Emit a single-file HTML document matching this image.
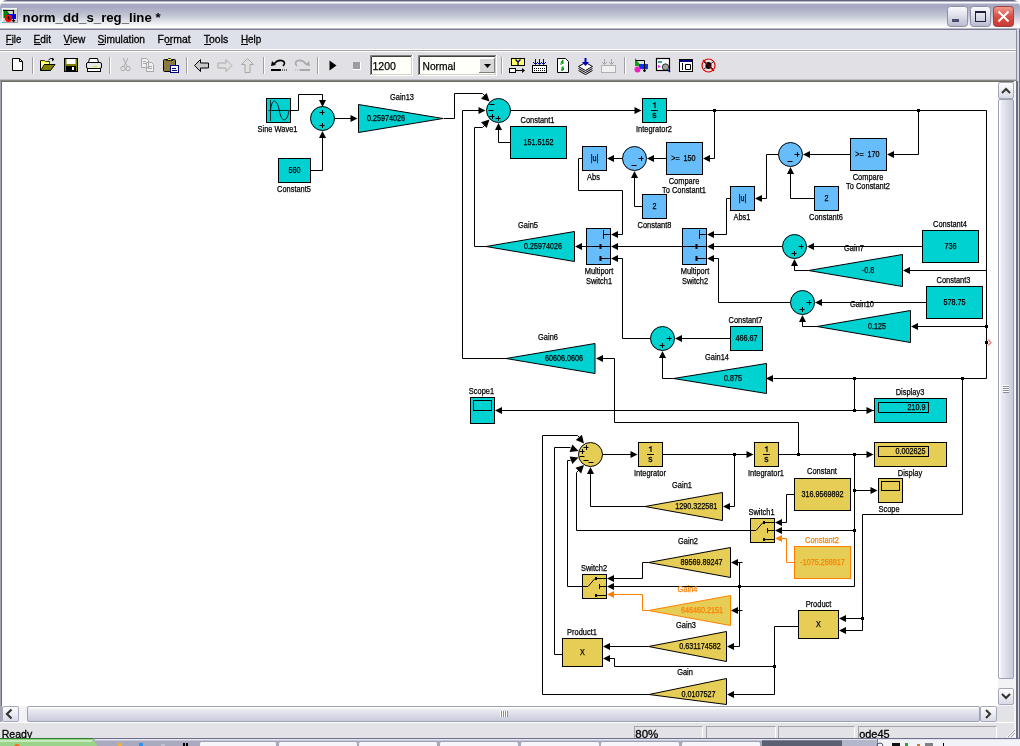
<!DOCTYPE html>
<html><head><meta charset="utf-8"><style>
html,body{margin:0;padding:0;width:1020px;height:746px;overflow:hidden;background:#fff;font-family:"Liberation Sans",sans-serif;}
.a{position:absolute;}
#title{left:0;top:0;width:1020px;height:29px;background:linear-gradient(to bottom,#5e5f7c 0px,#6a6b88 1px,#fafafc 2px,#ffffff 3px,#a9aac4 4px,#a7a8c2 7px,#c4c8d5 16px,#eef0f3 24px,#ffffff 27px,#fafafa 28px,#7a7b92 29px);border-radius:7px 7px 0 0;}
#ttext{left:23px;top:8px;font-weight:bold;font-size:14px;color:#000;white-space:nowrap;letter-spacing:0px;}
#menubar{left:0;top:29px;width:1020px;height:20px;background:#dfe1ea;border-top:1px solid #7b7c93;}
.mi{position:absolute;top:34px;font-size:12px;color:#000;}
#tb{left:0;top:49px;width:1020px;height:33px;background:linear-gradient(to bottom,#ffffff 0px,#ffffff 0.5px,#a4a4a6 1px,#a4a4a6 2px,#ffffff 2.5px,#e1e0e5 3px,#e1e0e5 30px,#9e9ea2 31px,#6d6d62 32px,#6d6d62 33px);}
#lb{left:0;top:81px;width:1px;height:641px;background:#a4a4ae;}
#lb2{left:1px;top:81px;width:1px;height:625px;background:#6d6d62;}
#rb{left:1014px;top:81px;width:6px;height:657px;background:linear-gradient(to right,#f6f6f0 0,#f6f6f0 2px,#6b6c86 2px,#6b6c86 4px,#d2d3de 4px,#d2d3de 5px,#6b6c86 5px);}
#vsb{left:998px;top:82px;width:16px;height:624px;background:#f3f3f6;}
#hsb{left:2px;top:706px;width:996px;height:16px;background:#f3f3f6;}
.btn{position:absolute;box-sizing:border-box;border:1px solid #a5a7bd;border-radius:2px;background:linear-gradient(to bottom,#ffffff,#d9dae6);}
.thumbv{position:absolute;box-sizing:border-box;border:1px solid #9d9fb3;border-radius:2px;background:linear-gradient(to right,#ffffff 0,#ffffff 1px,#ececf2 2px,#c9cbdc 100%);}
.thumbh{position:absolute;box-sizing:border-box;border:1px solid #9d9fb3;border-radius:2px;background:linear-gradient(to bottom,#ffffff 0,#ffffff 1px,#ececf2 2px,#c9cbdc 100%);}
#corner{left:997px;top:706px;width:17px;height:16px;background:#e3e2e6;}
#status{left:0;top:722px;width:1014px;height:16px;background:#e3e2e6;border-top:1px solid #fff;}
.sp{position:absolute;top:726px;height:12px;box-sizing:border-box;border-top:1px solid #a4a4a8;border-left:1px solid #a4a4a8;border-right:1px solid #ffffff;}
.st{position:absolute;top:726px;font-size:12px;color:#000;}
#task{left:0;top:738px;width:1020px;height:8px;background:linear-gradient(to bottom,#6a7088 0,#6a7088 1px,#c6c9d8 1px,#b7bbcc 8px);}
</style></head><body>
<div id="title" class="a"></div>
<svg class="a" style="left:947px;top:6px" width="68" height="22" viewBox="0 0 68 22">
 <defs>
  <linearGradient id="gb" x1="0" y1="0" x2="0" y2="1"><stop offset="0" stop-color="#fcfcfe"/><stop offset="0.6" stop-color="#d5d6e3"/><stop offset="1" stop-color="#b8b9cd"/></linearGradient>
  <linearGradient id="gr" x1="0" y1="0" x2="0" y2="1"><stop offset="0" stop-color="#f0a090"/><stop offset="0.5" stop-color="#d84f45"/><stop offset="1" stop-color="#c83a32"/></linearGradient>
 </defs>
 <rect x="0.5" y="0.5" width="20" height="20" rx="3" fill="url(#gb)" stroke="#8e90a8"/>
 <rect x="5" y="13" width="7" height="3" fill="#4b4c6a"/>
 <rect x="23.5" y="0.5" width="20" height="20" rx="3" fill="url(#gb)" stroke="#8e90a8"/>
 <rect x="28.5" y="5.5" width="10" height="10" fill="none" stroke="#20203a"/>
 <rect x="28" y="5" width="11" height="2" fill="#20203a"/>
 <rect x="46.5" y="0.5" width="20" height="20" rx="3" fill="url(#gr)" stroke="#a04040"/>
 <path d="M51.5,5.5 L61.5,15.5 M61.5,5.5 L51.5,15.5" stroke="#fff" stroke-width="2"/>
</svg>
<div id="menubar" class="a"></div>
<div id="tb" class="a"></div>

<div id="lb" class="a"></div>
<div id="lb2" class="a"></div>
<div id="rb" class="a"></div><div class="a" style="left:1016px;top:29px;width:4px;height:52px;background:linear-gradient(to right,#8c8da0 0,#8c8da0 1px,#d8d9e6 1px,#d8d9e6 3px,#6b6c86 3px)"></div>
<div id="vsb" class="a"></div>
<div class="btn" style="left:998px;top:82px;width:16px;height:17px"></div>
<svg class="a" style="left:998px;top:82px" width="16" height="17"><path d="M4,11 L8,7 L12,11" stroke="#333" stroke-width="2" fill="none"/></svg>
<div class="thumbv" style="left:998px;top:99px;width:16px;height:580px"></div>
<div class="btn" style="left:998px;top:688px;width:16px;height:17px"></div>
<svg class="a" style="left:998px;top:688px" width="16" height="17"><path d="M4,6 L8,10 L12,6" stroke="#333" stroke-width="2" fill="none"/></svg>
<div id="hsb" class="a"></div>
<div class="btn" style="left:2px;top:706px;width:17px;height:16px"></div>
<div class="a" style="left:1px;top:706px;width:1px;height:16px;background:#a8a8b2"></div><svg class="a" style="left:2px;top:706px" width="17" height="16"><path d="M9.5,3.5 L5,8 L9.5,12.5" stroke="#333" stroke-width="2.2" fill="none"/></svg>
<div class="thumbh" style="left:27px;top:706px;width:953px;height:16px"></div>
<div class="btn" style="left:980px;top:706px;width:17px;height:16px"></div>
<svg class="a" style="left:980px;top:706px" width="17" height="16"><path d="M6,4 L10,8 L6,12" stroke="#333" stroke-width="2" fill="none"/></svg>
<div id="corner" class="a"></div>
<div id="status" class="a"></div>
<div class="sp" style="left:634px;width:69px"></div>
<div class="sp" style="left:706px;width:70px"></div>
<div class="sp" style="left:778px;width:77px"></div>
<div class="sp" style="left:858px;width:139px"></div>
<div id="task" class="a"></div>
<svg class="a" style="left:0;top:0;will-change:transform" width="1020" height="746" font-family="Liberation Sans, sans-serif">
<rect x="2" y="8" width="16" height="15" fill="#fff"/><rect x="3" y="9" width="15" height="14" fill="#9a9a9a"/><rect x="3" y="9" width="14" height="13" fill="#d6d6d6"/>
<path d="M3.5,9.5 L3.5,18 L6,18 L9.5,14 L6.5,10 Z" fill="#008000"/>
<rect x="7" y="14" width="9" height="5" fill="#0000ff"/>
<circle cx="8.5" cy="18.3" r="3.6" fill="#ff0000"/>
<path d="M8.5,16 v3 h2" stroke="#000" fill="none" stroke-width="1.2"/>
<path d="M3,10.5 h10.5 v11" stroke="#000" fill="none" stroke-width="1.2"/><path d="M12,20 l1.5,2 l1.5,-2" stroke="#000" fill="none"/>
<rect x="2" y="22" width="1" height="1" fill="#00e0e0"/><rect x="17" y="8" width="1" height="1" fill="#00e0e0"/>
<rect x="32" y="57" width="1" height="17" fill="#a0a0a4"/><rect x="33" y="57" width="1" height="17" fill="#ffffff"/>
<rect x="109" y="57" width="1" height="17" fill="#a0a0a4"/><rect x="110" y="57" width="1" height="17" fill="#ffffff"/>
<rect x="186" y="57" width="1" height="17" fill="#a0a0a4"/><rect x="187" y="57" width="1" height="17" fill="#ffffff"/>
<rect x="263" y="57" width="1" height="17" fill="#a0a0a4"/><rect x="264" y="57" width="1" height="17" fill="#ffffff"/>
<rect x="317" y="57" width="1" height="17" fill="#a0a0a4"/><rect x="318" y="57" width="1" height="17" fill="#ffffff"/>
<rect x="501" y="57" width="1" height="17" fill="#a0a0a4"/><rect x="502" y="57" width="1" height="17" fill="#ffffff"/>
<rect x="624" y="57" width="1" height="17" fill="#a0a0a4"/><rect x="625" y="57" width="1" height="17" fill="#ffffff"/>
<path d="M12.5,58.5 h7 l3,3 v9 h-10 z" fill="#fff" stroke="#000"/><path d="M19.5,58.5 v3 h3" fill="none" stroke="#000"/>
<path d="M40.5,60.5 h4 l1,1 h4 v2 h-9 z" fill="#ffff00" stroke="#000" stroke-width="0.8"/>
<path d="M40.5,61 v9.5 h10 l4.5,-6 h-11 l-3.5,6" fill="#808000" stroke="#000"/>
<path d="M41,62 h8 v2 h-5 l-3,5 z" fill="#ffff80"/>
<path d="M48.5,60 q2,-3 5,-1" fill="none" stroke="#000"/><path d="M52,58 l2,1.5 l-2,1.5" fill="#000" stroke="#000" stroke-width="0.6"/>
<rect x="64.5" y="58.5" width="13" height="13" fill="#808000" stroke="#000"/>
<rect x="66.5" y="59" width="9" height="5" fill="#fff"/><rect x="66" y="66" width="10" height="5" fill="#000"/><rect x="72" y="67" width="2" height="3" fill="#fff"/>
<path d="M89.5,58.5 h8 l1,4 h-10 z" fill="#fff" stroke="#000"/>
<rect x="86.5" y="62.5" width="15" height="6" rx="1.5" fill="#e8e8e8" stroke="#000"/>
<rect x="87.5" y="68.5" width="13" height="3" fill="#fff" stroke="#000"/><rect x="93" y="66" width="4" height="1" fill="#e0e000"/>
<path d="M123,58 l4,8 M128,58 l-4,8" stroke="#a8a8a8" fill="none"/><circle cx="123" cy="68.5" r="2.2" fill="none" stroke="#a8a8a8"/><circle cx="128" cy="68.5" r="2.2" fill="none" stroke="#a8a8a8"/>
<path d="M141.5,58.5 h5 l2,2 v7 h-7 z M146.5,62.5 h5 l2,2 v7 h-7 z" fill="#f0f0f0" stroke="#a8a8a8"/>
<path d="M143,61.5 h3 M143,63.5 h3 M148,66.5 h4 M148,68.5 h4" stroke="#a8a8a8"/>
<rect x="163.5" y="59.5" width="12" height="12" rx="1" fill="#8a7a40" stroke="#000"/>
<path d="M166.5,60.5 l2,-2 h2 l2,2 z" fill="#ffff40" stroke="#000" stroke-width="0.8"/>
<rect x="170.5" y="65.5" width="8" height="7" fill="#fff" stroke="#000080"/><path d="M172,68.5 h4 M172,70.5 h5" stroke="#000080"/>
<path d="M194.5,65.5 l6,-6 v3.5 h8 v5 h-8 v3.5 z" fill="#c8c8c8" stroke="#000"/>
<path d="M232,65.5 l-6,-6 v3.5 h-8 v5 h8 v3.5 z" fill="#e0e0e0" stroke="#a8a8a8"/>
<path d="M247.5,58.5 l6,6 h-3.5 v8 h-5 v-8 h-3.5 z" fill="#e0e0e0" stroke="#a8a8a8"/>
<path d="M274,64 q4,-5 9,-3 q3,2 0,5" fill="none" stroke="#000" stroke-width="1.6"/><path d="M272,61 l4,4 l-5,1 z" fill="#000"/><rect x="271" y="69" width="10" height="2" fill="#000"/><path d="M282,70 h5" stroke="#000" stroke-dasharray="1,1"/>
<path d="M306,64 q-4,-5 -9,-3 q-3,2 0,5" fill="none" stroke="#a8a8a8" stroke-width="1.6"/><path d="M309,61 l-4,4 l5,1 z" fill="#a8a8a8"/><rect x="300" y="69" width="10" height="2" fill="#a8a8a8"/><path d="M295,70 h5" stroke="#a8a8a8" stroke-dasharray="1,1"/>
<path d="M329.5,60.5 l7,5 l-7,5 z" fill="#000"/>
<rect x="353" y="62" width="7" height="7" fill="#9c9ba6"/><path d="M353,69.5 h8 M360.5,62 v8" stroke="#fff"/>
<rect x="370" y="55" width="43" height="21" fill="#fffffa"/><path d="M370.5,75 v-19.5 h42" stroke="#808080" fill="none"/><path d="M371.5,74 v-17.5 h40" stroke="#404040" fill="none"/><path d="M371,74.5 h41 M411.5,56 v19" stroke="#d4d0c8"/><path d="M370,75.5 h43 M412.5,55 v21" stroke="#ffffff"/>
<text x="372.5" y="69.5" font-size="11" textLength="23.5" lengthAdjust="spacingAndGlyphs" stroke="#000" stroke-width="0.25">1200</text>
<rect x="418" y="55" width="79" height="21" fill="#fffffa"/><path d="M418.5,75 v-19.5 h78" stroke="#808080" fill="none"/><path d="M419.5,74 v-17.5 h76" stroke="#404040" fill="none"/><path d="M419,74.5 h77 M495.5,56 v19" stroke="#d4d0c8"/><path d="M418,75.5 h79 M496.5,55 v21" stroke="#ffffff"/>
<rect x="479" y="58" width="16" height="15" fill="#d8d8d8"/><path d="M479.5,72.5 v-14 h15" stroke="#fff" fill="none"/><path d="M479,72.5 h16 M494.5,58 v15" stroke="#808080" fill="none"/>
<path d="M484,64 h7 l-3.5,4 z" fill="#000"/>
<text x="422.5" y="69.5" font-size="11" textLength="33" lengthAdjust="spacingAndGlyphs" stroke="#000" stroke-width="0.25">Normal</text>
<rect x="511.5" y="58.5" width="13" height="7" fill="#ffff60" stroke="#000"/><path d="M515.5,59.5 l2.5,2.5 l2.5,-2.5 M518,62 v3" stroke="#000080" stroke-width="1.4" fill="none"/>
<rect x="509.5" y="68.5" width="6" height="4" fill="#fff" stroke="#000"/><path d="M516,70.5 h7" stroke="#000"/><path d="M522,68 l3,2.5 l-3,2.5 z" fill="#000"/>
<rect x="532.5" y="65.5" width="14" height="7" fill="#fff" stroke="#000"/><path d="M534,68.5 h11 M534,70.5 h11" stroke="#000" stroke-dasharray="1,1"/>
<path d="M535.5,59 v5 M539.5,59 v5 M543.5,59 v5 M533,62 l2.5,2.5 l2.5,-2.5 M537,62 l2.5,2.5 l2.5,-2.5 M541,62 l2.5,2.5 l2.5,-2.5" stroke="#0000a0" fill="none"/>
<path d="M557.5,58.5 h8 l3,3 v11 h-11 z" fill="#fff" stroke="#000"/><path d="M561,62 l2,-2 v4 z M564,69 l-2,2 v-4 z" fill="#10a010" stroke="#10a010"/><path d="M563,61 q-3,1 -2,4 M561,70 q3,-1 2,-4" stroke="#10a010" fill="none"/>
<path d="M578.5,66.5 l7,-4 l7,4 l-7,4 z" fill="#fff" stroke="#000"/><path d="M578.5,68.5 l7,4 l7,-4 M578.5,70.5 l7,4 l7,-4" fill="none" stroke="#000"/>
<path d="M585.5,58 v6" stroke="#0000c0" stroke-width="2"/><path d="M582,62 h7 l-3.5,4 z" fill="#0000c0"/>
<rect x="601.5" y="65.5" width="14" height="7" fill="#f0f0f0" stroke="#b0b0b0"/><path d="M604.5,59 v5 M611.5,59 v5 M602,62 l2.5,2.5 l2.5,-2.5 M609,62 l2.5,2.5 l2.5,-2.5" stroke="#a8a8a8" fill="none"/>
<path d="M635,58 v8 h6 z" fill="#10a010"/><rect x="639" y="64" width="9" height="5" fill="#1030f0"/><circle cx="637.5" cy="69.5" r="3" fill="#f020c0"/><path d="M635.5,60.5 h9 v11 M643,69.5 l1.5,2.5 l1.5,-2.5" stroke="#000" fill="none"/>
<rect x="656.5" y="58.5" width="13" height="12" fill="#fff" stroke="#000" stroke-width="1.2"/><rect x="658" y="61" width="4" height="2" fill="#40a0a0"/><path d="M658,65 l3,1.5 l-3,1.5 z" fill="#f020f0"/><circle cx="665.5" cy="67" r="3.2" fill="#a0a0a0" stroke="#000" stroke-width="0.7"/><path d="M668,70 l2,2" stroke="#000080" stroke-width="1.2"/>
<rect x="679.5" y="59.5" width="13" height="12" fill="#fff" stroke="#000"/><rect x="680" y="60" width="12" height="2" fill="#000080"/><path d="M682.5,63 v7 M685.5,64.5 h5 v5 h-5 z" stroke="#000" fill="none"/>
<circle cx="708.5" cy="65.5" r="6.5" fill="none" stroke="#e00000" stroke-width="1.2"/><ellipse cx="708.5" cy="65.5" rx="3" ry="3.5" fill="#000"/><path d="M703,60 l11,11" stroke="#e00000" stroke-width="1.2"/><path d="M704,62 l9,7 M713,62 l-9,7" stroke="#000" stroke-width="0.8"/>
<text x="5.8" y="43" font-size="11" textLength="15.4" lengthAdjust="spacingAndGlyphs" stroke="#000" stroke-width="0.3">File</text>
<rect x="6" y="44" width="7" height="1" fill="#000"/>
<text x="33.6" y="43" font-size="11" textLength="17.5" lengthAdjust="spacingAndGlyphs" stroke="#000" stroke-width="0.3">Edit</text>
<rect x="34" y="44" width="7" height="1" fill="#000"/>
<text x="63.5" y="43" font-size="11" textLength="21.7" lengthAdjust="spacingAndGlyphs" stroke="#000" stroke-width="0.3">View</text>
<rect x="64" y="44" width="6" height="1" fill="#000"/>
<text x="97.4" y="43" font-size="11" textLength="47.6" lengthAdjust="spacingAndGlyphs" stroke="#000" stroke-width="0.3">Simulation</text>
<rect x="98" y="44" width="7" height="1" fill="#000"/>
<text x="157.5" y="43" font-size="11" textLength="33.1" lengthAdjust="spacingAndGlyphs" stroke="#000" stroke-width="0.3">Format</text>
<rect x="166" y="44" width="6" height="1" fill="#000"/>
<text x="203.8" y="43" font-size="11" textLength="24.4" lengthAdjust="spacingAndGlyphs" stroke="#000" stroke-width="0.3">Tools</text>
<rect x="204" y="44" width="7" height="1" fill="#000"/>
<text x="240.9" y="43" font-size="11" textLength="20.4" lengthAdjust="spacingAndGlyphs" stroke="#000" stroke-width="0.3">Help</text>
<rect x="241" y="44" width="7" height="1" fill="#000"/>
<text x="22.6" y="21.5" font-size="13" font-weight="bold" textLength="138" lengthAdjust="spacingAndGlyphs">norm_dd_s_reg_line *</text>
<text x="1.7" y="737.6" font-size="11" textLength="30.5" lengthAdjust="spacingAndGlyphs" stroke="#000" stroke-width="0.3">Ready</text>
<text x="635.3" y="737.6" font-size="11" textLength="23" lengthAdjust="spacingAndGlyphs" stroke="#000" stroke-width="0.3">80%</text>
<text x="859.2" y="737.6" font-size="11" textLength="30.4" lengthAdjust="spacingAndGlyphs" stroke="#000" stroke-width="0.3">ode45</text>
<rect x="1003" y="385" width="6" height="1" fill="#fff"/><rect x="1003" y="386" width="6" height="1" fill="#8a8c9c"/>
<rect x="1003" y="387" width="6" height="1" fill="#fff"/><rect x="1003" y="388" width="6" height="1" fill="#8a8c9c"/>
<rect x="1003" y="389" width="6" height="1" fill="#fff"/><rect x="1003" y="390" width="6" height="1" fill="#8a8c9c"/>
<rect x="1003" y="391" width="6" height="1" fill="#fff"/><rect x="1003" y="392" width="6" height="1" fill="#8a8c9c"/>
<rect x="500" y="711" width="1" height="6" fill="#fff"/><rect x="501" y="711" width="1" height="6" fill="#8a8c9c"/>
<rect x="502" y="711" width="1" height="6" fill="#fff"/><rect x="503" y="711" width="1" height="6" fill="#8a8c9c"/>
<rect x="504" y="711" width="1" height="6" fill="#fff"/><rect x="505" y="711" width="1" height="6" fill="#8a8c9c"/>
<rect x="506" y="711" width="1" height="6" fill="#fff"/><rect x="507" y="711" width="1" height="6" fill="#8a8c9c"/>
<path d="M1007,737 L1015,729 M1010,737 L1015,732 M1013,737 L1015,735" stroke="#fff" stroke-width="1"/><path d="M1008,737 L1015,730 M1011,737 L1015,733" stroke="#a0a0a8" stroke-width="1"/>
<rect x="0" y="738" width="1020" height="8" fill="#a9aac0"/>
<rect x="0" y="738" width="1020" height="1" fill="#6e6f8c"/>
<rect x="95" y="739" width="925" height="1.5" fill="#e4e5ee"/>
<path d="M0,738 H93 L97,746 H0 Z" fill="#9ad48a"/>
<rect x="0" y="738" width="93" height="1" fill="#2a7d2a"/><rect x="0" y="740" width="92" height="2" fill="#c6eabb"/>
<circle cx="17" cy="747" r="3" fill="#f06a20"/>
<rect x="118" y="743" width="4" height="3" fill="#f0b040"/><rect x="139" y="743" width="4" height="3" fill="#3090f0"/><rect x="161" y="744" width="4" height="2" fill="#c0c0d0"/><rect x="183" y="743" width="2" height="3" fill="#000"/><rect x="186" y="743" width="2" height="3" fill="#000"/>
<rect x="199.5" y="741.5" width="77" height="6" rx="2" fill="#f6f6fa" stroke="#9d9fb5"/>
<rect x="278.5" y="741.5" width="79" height="6" rx="2" fill="#f6f6fa" stroke="#9d9fb5"/>
<rect x="358.5" y="741.5" width="79" height="6" rx="2" fill="#f6f6fa" stroke="#9d9fb5"/>
<rect x="439.5" y="741.5" width="79" height="6" rx="2" fill="#f6f6fa" stroke="#9d9fb5"/>
<rect x="520.5" y="741.5" width="79" height="6" rx="2" fill="#f6f6fa" stroke="#9d9fb5"/>
<rect x="600.5" y="741.5" width="79" height="6" rx="2" fill="#f6f6fa" stroke="#9d9fb5"/>
<rect x="681.5" y="741.5" width="79" height="6" rx="2" fill="#f6f6fa" stroke="#9d9fb5"/>
<rect x="762" y="740" width="80" height="6" fill="#5b6172"/><rect x="762" y="740" width="80" height="1" fill="#7c8294"/>
<rect x="842" y="740" width="35" height="6" fill="#b4b6cb"/>
<path d="M877,740 H1020 V746 H877 Z" fill="#f2f3f8"/><rect x="877" y="738" width="1" height="8" fill="#7a7c96"/>
<circle cx="880" cy="746" r="3" fill="none" stroke="#505060"/><rect x="892" y="743" width="8" height="3" fill="#101010"/><rect x="905" y="743" width="3" height="3" fill="#30a030"/><rect x="917" y="744" width="3" height="2" fill="#c08030"/><rect x="925" y="743" width="8" height="3" fill="#808080"/><rect x="943" y="743" width="1" height="3" fill="#000"/>
<rect x="266.5" y="98.5" width="24" height="24" fill="#00d2d2" stroke="#000"/>
<path d="M268.5,110.5 h21 M270.5,100 v21" stroke="#000" fill="none" stroke-width="0.8"/>
<path d="M270.5,110.5 C271.5,98 277,98 279.3,110.5 S287,123 289,110.5" stroke="#000" fill="none" stroke-width="0.9"/>
<text x="257.55" y="132.00" font-size="8.5" textLength="39.89" lengthAdjust="spacingAndGlyphs" fill="#000" stroke="#000" stroke-width="0.25">Sine Wave1</text>
<circle cx="322.5" cy="118.5" r="12" fill="#00d2d2" stroke="#000"/>
<path d="M319.5,112.5 h5 M322.5,110 v5" stroke="#000" fill="none"/>
<path d="M319.5,125.5 h5 M322.5,123 v5" stroke="#000" fill="none"/>
<rect x="278.5" y="158.5" width="32" height="24" fill="#00d2d2" stroke="#000"/>
<text x="288.49" y="172.50" font-size="8.5" textLength="12.01" lengthAdjust="spacingAndGlyphs" fill="#000" stroke="#000" stroke-width="0.25">560</text>
<text x="277.02" y="192.00" font-size="8.5" textLength="33.96" lengthAdjust="spacingAndGlyphs" fill="#000" stroke="#000" stroke-width="0.25">Constant5</text>
<polygon points="358.5,104.5 358.5,132.5 443,118.5" fill="#00d2d2" stroke="#000"/>
<text x="366.98" y="120.50" font-size="8.5" textLength="38.04" lengthAdjust="spacingAndGlyphs" fill="#000" stroke="#000" stroke-width="0.25">0.25974026</text>
<text x="389.99" y="100.00" font-size="8.5" textLength="24.02" lengthAdjust="spacingAndGlyphs" fill="#000" stroke="#000" stroke-width="0.25">Gain13</text>
<path d="M290.5,110.5 L298.5,110.5 L298.5,94.5 L322.5,94.5 L322.5,100.5" fill="none" stroke="#000" stroke-width="1"/>
<polygon points="322.5,107 319,100 326,100" fill="#000"/>
<path d="M310.5,170.5 L322.5,170.5 L322.5,137.5" fill="none" stroke="#000" stroke-width="1"/>
<polygon points="322.5,131 319,138 326,138" fill="#000"/>
<path d="M334.5,118.5 L351.5,118.5" fill="none" stroke="#000" stroke-width="1"/>
<polygon points="357.5,118.5 350.5,115 350.5,122" fill="#000"/>
<circle cx="498.5" cy="110.5" r="12" fill="#00d2d2" stroke="#000"/>
<path d="M489.5,104.5 h5" stroke="#000" fill="none"/>
<path d="M488.5,110.5 h5" stroke="#000" fill="none"/>
<path d="M489.5,116.5 h5 M492.5,114 v5" stroke="#000" fill="none"/>
<path d="M495.5,118.5 h5 M498.5,116 v5" stroke="#000" fill="none"/>
<path d="M443.5,118.5 L454.5,118.5 L454.5,93.5 L482.5,93.5 L485.5,96.5" fill="none" stroke="#000" stroke-width="1"/>
<polygon points="489.50,101.50 481.01,98.67 486.67,93.01" fill="#000"/>
<path d="M462.5,358.5 L462.5,110.5 L479.5,110.5" fill="none" stroke="#000" stroke-width="1"/>
<polygon points="485.5,110.5 478.5,107 478.5,114" fill="#000"/>
<path d="M474.5,246.5 L474.5,127.5 L482.5,127.5 L485.5,124.5" fill="none" stroke="#000" stroke-width="1"/>
<polygon points="489.50,119.50 486.67,127.99 481.01,122.33" fill="#000"/>
<path d="M510.5,142.5 L498.5,142.5 L498.5,129.5" fill="none" stroke="#000" stroke-width="1"/>
<polygon points="498.5,123 495,130 502,130" fill="#000"/>
<rect x="510.5" y="126.5" width="56" height="32" fill="#00d2d2" stroke="#000"/>
<text x="523.49" y="144.50" font-size="8.5" textLength="30.03" lengthAdjust="spacingAndGlyphs" fill="#000" stroke="#000" stroke-width="0.25">151.5152</text>
<text x="520.52" y="123.00" font-size="8.5" textLength="33.96" lengthAdjust="spacingAndGlyphs" fill="#000" stroke="#000" stroke-width="0.25">Constant1</text>
<path d="M510.5,110.5 L635.5,110.5" fill="none" stroke="#000" stroke-width="1"/>
<polygon points="641.5,110.5 634.5,107 634.5,114" fill="#000"/>
<rect x="642.5" y="98.5" width="24" height="24" fill="#00d2d2" stroke="#000"/>
<path d="M655.0,102 v6 M655.0,102.5 l-2,1.5" stroke="#000" stroke-width="1.1" fill="none"/>
<path d="M651.0,110.5 h7" stroke="#000"/>
<text x="652.30" y="117.8" font-size="8.5" stroke="#000" stroke-width="0.3">s</text>
<text x="635.99" y="132.00" font-size="8.5" textLength="36.03" lengthAdjust="spacingAndGlyphs" fill="#000" stroke="#000" stroke-width="0.25">Integrator2</text>
<path d="M666.5,110.5 L986.5,110.5 L986.5,378.5 L773.5,378.5" fill="none" stroke="#000" stroke-width="1"/>
<polygon points="766,378.5 773,375 773,382" fill="#000"/>
<rect x="713" y="109" width="3" height="3" fill="#000"/>
<rect x="917" y="109" width="3" height="3" fill="#000"/>
<rect x="985" y="325" width="3" height="3" fill="#000"/>
<rect x="853" y="377" width="3" height="3" fill="#000"/>
<rect x="961" y="377" width="3" height="3" fill="#000"/>
<rect x="985" y="341" width="3" height="3" fill="#000"/>
<path d="M988,339.5 l3,3 l-3,3" stroke="#f00" fill="none" stroke-width="1"/>
<path d="M714.5,110.5 L714.5,158.5 L709.5,158.5" fill="none" stroke="#000" stroke-width="1"/>
<polygon points="703,158.5 710,155 710,162" fill="#000"/>
<rect x="666.5" y="142.5" width="36" height="32" fill="#66bdfa" stroke="#000"/>
<text x="671.29" y="160.50" font-size="8.5" textLength="8.41" lengthAdjust="spacingAndGlyphs" fill="#000" stroke="#000" stroke-width="0.25">&gt;=</text>
<text x="683.49" y="160.50" font-size="8.5" textLength="12.01" lengthAdjust="spacingAndGlyphs" fill="#000" stroke="#000" stroke-width="0.25">150</text>
<text x="668.68" y="184.00" font-size="8.5" textLength="30.64" lengthAdjust="spacingAndGlyphs" fill="#000" stroke="#000" stroke-width="0.25">Compare</text>
<text x="662.05" y="193.00" font-size="8.5" textLength="43.90" lengthAdjust="spacingAndGlyphs" fill="#000" stroke="#000" stroke-width="0.25">To Constant1</text>
<path d="M666.5,158.5 L653.5,158.5" fill="none" stroke="#000" stroke-width="1"/>
<polygon points="647,158.5 654,155 654,162" fill="#000"/>
<circle cx="634.5" cy="158.5" r="12" fill="#66bdfa" stroke="#000"/>
<path d="M638.5,158.5 h5 M641.5,156 v5" stroke="#000" fill="none"/>
<path d="M631.5,165.5 h5" stroke="#000" fill="none"/>
<path d="M622.5,158.5 L613.5,158.5" fill="none" stroke="#000" stroke-width="1"/>
<polygon points="607,158.5 614,155 614,162" fill="#000"/>
<rect x="582.5" y="146.5" width="24" height="24" fill="#66bdfa" stroke="#000"/>
<text x="590.63" y="160.50" font-size="8.5" textLength="7.75" lengthAdjust="spacingAndGlyphs" fill="#000" stroke="#000" stroke-width="0.25">|u|</text>
<text x="587.08" y="180.00" font-size="8.5" textLength="12.84" lengthAdjust="spacingAndGlyphs" fill="#000" stroke="#000" stroke-width="0.25">Abs</text>
<path d="M582.5,158.5 L578.5,158.5 L578.5,190.5 L622.5,190.5 L622.5,234.5 L617.5,234.5" fill="none" stroke="#000" stroke-width="1"/>
<polygon points="611,234.5 618,231 618,238" fill="#000"/>
<rect x="642.5" y="194.5" width="24" height="24" fill="#66bdfa" stroke="#000"/>
<text x="652.50" y="208.50" font-size="8.5" textLength="4.00" lengthAdjust="spacingAndGlyphs" fill="#000" stroke="#000" stroke-width="0.25">2</text>
<text x="637.52" y="228.00" font-size="8.5" textLength="33.96" lengthAdjust="spacingAndGlyphs" fill="#000" stroke="#000" stroke-width="0.25">Constant8</text>
<path d="M642.5,206.5 L634.5,206.5 L634.5,177.5" fill="none" stroke="#000" stroke-width="1"/>
<polygon points="634.5,171 631,178 638,178" fill="#000"/>
<path d="M918.5,110.5 L918.5,154.5 L893.5,154.5" fill="none" stroke="#000" stroke-width="1"/>
<polygon points="887,154.5 894,151 894,158" fill="#000"/>
<rect x="850.5" y="138.5" width="36" height="32" fill="#66bdfa" stroke="#000"/>
<text x="855.29" y="156.50" font-size="8.5" textLength="8.41" lengthAdjust="spacingAndGlyphs" fill="#000" stroke="#000" stroke-width="0.25">&gt;=</text>
<text x="867.49" y="156.50" font-size="8.5" textLength="12.01" lengthAdjust="spacingAndGlyphs" fill="#000" stroke="#000" stroke-width="0.25">170</text>
<text x="852.68" y="180.00" font-size="8.5" textLength="30.64" lengthAdjust="spacingAndGlyphs" fill="#000" stroke="#000" stroke-width="0.25">Compare</text>
<text x="846.05" y="189.00" font-size="8.5" textLength="43.90" lengthAdjust="spacingAndGlyphs" fill="#000" stroke="#000" stroke-width="0.25">To Constant2</text>
<path d="M850.5,154.5 L809.5,154.5" fill="none" stroke="#000" stroke-width="1"/>
<polygon points="803,154.5 810,151 810,158" fill="#000"/>
<circle cx="790.5" cy="154.5" r="12" fill="#66bdfa" stroke="#000"/>
<path d="M794.5,154.5 h5 M797.5,152 v5" stroke="#000" fill="none"/>
<path d="M787.5,161.5 h5" stroke="#000" fill="none"/>
<path d="M778.5,154.5 L766.5,154.5 L766.5,198.5 L761.5,198.5" fill="none" stroke="#000" stroke-width="1"/>
<polygon points="755,198.5 762,195 762,202" fill="#000"/>
<rect x="730.5" y="186.5" width="24" height="24" fill="#66bdfa" stroke="#000"/>
<text x="738.63" y="200.50" font-size="8.5" textLength="7.75" lengthAdjust="spacingAndGlyphs" fill="#000" stroke="#000" stroke-width="0.25">|u|</text>
<text x="733.51" y="219.50" font-size="8.5" textLength="16.98" lengthAdjust="spacingAndGlyphs" fill="#000" stroke="#000" stroke-width="0.25">Abs1</text>
<rect x="814.5" y="186.5" width="24" height="24" fill="#66bdfa" stroke="#000"/>
<text x="824.50" y="200.50" font-size="8.5" textLength="4.00" lengthAdjust="spacingAndGlyphs" fill="#000" stroke="#000" stroke-width="0.25">2</text>
<text x="809.02" y="219.50" font-size="8.5" textLength="33.96" lengthAdjust="spacingAndGlyphs" fill="#000" stroke="#000" stroke-width="0.25">Constant6</text>
<path d="M814.5,198.5 L790.5,198.5 L790.5,173.5" fill="none" stroke="#000" stroke-width="1"/>
<polygon points="790.5,167 787,174 794,174" fill="#000"/>
<path d="M730.5,198.5 L726.5,198.5 L726.5,234.5 L713.5,234.5" fill="none" stroke="#000" stroke-width="1"/>
<polygon points="707,234.5 714,231 714,238" fill="#000"/>
<rect x="682.5" y="228.5" width="24" height="36" fill="#66bdfa" stroke="#000"/>
<path d="M699.5,230 v9 M699.5,234.5 h7" stroke="#000" fill="none"/>
<path d="M682,246.5 h25" stroke="#000" fill="none"/>
<rect x="695.5" y="244" width="2" height="5" fill="#000"/>
<rect x="695.5" y="256" width="2" height="5" fill="#000"/>
<path d="M696,258.5 h10" stroke="#000" fill="none"/>
<text x="680.72" y="274.00" font-size="8.5" textLength="28.56" lengthAdjust="spacingAndGlyphs" fill="#000" stroke="#000" stroke-width="0.25">Multiport</text>
<text x="681.96" y="284.00" font-size="8.5" textLength="26.09" lengthAdjust="spacingAndGlyphs" fill="#000" stroke="#000" stroke-width="0.25">Switch2</text>
<rect x="586.5" y="228.5" width="24" height="36" fill="#66bdfa" stroke="#000"/>
<path d="M603.5,230 v9 M603.5,234.5 h7" stroke="#000" fill="none"/>
<path d="M586,246.5 h25" stroke="#000" fill="none"/>
<rect x="599.5" y="244" width="2" height="5" fill="#000"/>
<rect x="599.5" y="256" width="2" height="5" fill="#000"/>
<path d="M600,258.5 h10" stroke="#000" fill="none"/>
<text x="584.72" y="274.00" font-size="8.5" textLength="28.56" lengthAdjust="spacingAndGlyphs" fill="#000" stroke="#000" stroke-width="0.25">Multiport</text>
<text x="585.96" y="284.00" font-size="8.5" textLength="26.09" lengthAdjust="spacingAndGlyphs" fill="#000" stroke="#000" stroke-width="0.25">Switch1</text>
<path d="M782.5,246.5 L713.5,246.5" fill="none" stroke="#000" stroke-width="1"/>
<polygon points="707,246.5 714,243 714,250" fill="#000"/>
<path d="M682.5,246.5 L617.5,246.5" fill="none" stroke="#000" stroke-width="1"/>
<polygon points="611,246.5 618,243 618,250" fill="#000"/>
<path d="M586.5,246.5 L581.5,246.5" fill="none" stroke="#000" stroke-width="1"/>
<polygon points="575,246.5 582,243 582,250" fill="#000"/>
<polygon points="486,246.5 574.5,231.5 574.5,261.5" fill="#00d2d2" stroke="#000"/>
<text x="523.98" y="248.50" font-size="8.5" textLength="38.04" lengthAdjust="spacingAndGlyphs" fill="#000" stroke="#000" stroke-width="0.25">0.25974026</text>
<text x="518.06" y="227.50" font-size="8.5" textLength="19.88" lengthAdjust="spacingAndGlyphs" fill="#000" stroke="#000" stroke-width="0.25">Gain5</text>
<path d="M486.5,246.5 L474.5,246.5" fill="none" stroke="#000" stroke-width="1"/>
<path d="M790.5,302.5 L718.5,302.5 L718.5,258.5 L713.5,258.5" fill="none" stroke="#000" stroke-width="1"/>
<polygon points="707,258.5 714,255 714,262" fill="#000"/>
<path d="M650.5,338.5 L622.5,338.5 L622.5,258.5 L617.5,258.5" fill="none" stroke="#000" stroke-width="1"/>
<polygon points="611,258.5 618,255 618,262" fill="#000"/>
<rect x="922.5" y="230.5" width="56" height="32" fill="#00d2d2" stroke="#000"/>
<text x="944.49" y="248.50" font-size="8.5" textLength="12.01" lengthAdjust="spacingAndGlyphs" fill="#000" stroke="#000" stroke-width="0.25">736</text>
<text x="933.02" y="227.00" font-size="8.5" textLength="33.96" lengthAdjust="spacingAndGlyphs" fill="#000" stroke="#000" stroke-width="0.25">Constant4</text>
<path d="M922.5,246.5 L813.5,246.5" fill="none" stroke="#000" stroke-width="1"/>
<polygon points="807,246.5 814,243 814,250" fill="#000"/>
<circle cx="794.5" cy="246.5" r="12" fill="#00d2d2" stroke="#000"/>
<path d="M798.5,246.5 h5 M801.5,244 v5" stroke="#000" fill="none"/>
<path d="M791.5,253.5 h5 M794.5,251 v5" stroke="#000" fill="none"/>
<polygon points="808.5,270.5 902.5,254.5 902.5,286.5" fill="#00d2d2" stroke="#000"/>
<text x="861.80" y="272.50" font-size="8.5" textLength="12.41" lengthAdjust="spacingAndGlyphs" fill="#000" stroke="#000" stroke-width="0.25">-0.8</text>
<text x="844.06" y="251.00" font-size="8.5" textLength="19.88" lengthAdjust="spacingAndGlyphs" fill="#000" stroke="#000" stroke-width="0.25">Gain7</text>
<path d="M986.5,270.5 L909.5,270.5" fill="none" stroke="#000" stroke-width="1"/>
<polygon points="903,270.5 910,267 910,274" fill="#000"/>
<path d="M808.5,270.5 L794.5,270.5 L794.5,265.5" fill="none" stroke="#000" stroke-width="1"/>
<polygon points="794.5,259 791,266 798,266" fill="#000"/>
<rect x="926.5" y="286.5" width="56" height="32" fill="#00d2d2" stroke="#000"/>
<text x="943.49" y="304.50" font-size="8.5" textLength="22.02" lengthAdjust="spacingAndGlyphs" fill="#000" stroke="#000" stroke-width="0.25">578.75</text>
<text x="936.52" y="283.00" font-size="8.5" textLength="33.96" lengthAdjust="spacingAndGlyphs" fill="#000" stroke="#000" stroke-width="0.25">Constant3</text>
<path d="M926.5,302.5 L821.5,302.5" fill="none" stroke="#000" stroke-width="1"/>
<polygon points="815,302.5 822,299 822,306" fill="#000"/>
<circle cx="802.5" cy="302.5" r="12" fill="#00d2d2" stroke="#000"/>
<path d="M806.5,302.5 h5 M809.5,300 v5" stroke="#000" fill="none"/>
<path d="M799.5,309.5 h5 M802.5,307 v5" stroke="#000" fill="none"/>
<polygon points="817,326.5 910.5,310.5 910.5,342.5" fill="#00d2d2" stroke="#000"/>
<text x="867.99" y="328.50" font-size="8.5" textLength="18.02" lengthAdjust="spacingAndGlyphs" fill="#000" stroke="#000" stroke-width="0.25">0.125</text>
<text x="849.99" y="307.00" font-size="8.5" textLength="24.02" lengthAdjust="spacingAndGlyphs" fill="#000" stroke="#000" stroke-width="0.25">Gain10</text>
<path d="M986.5,326.5 L917.5,326.5" fill="none" stroke="#000" stroke-width="1"/>
<polygon points="911,326.5 918,323 918,330" fill="#000"/>
<path d="M817.5,326.5 L802.5,326.5 L802.5,321.5" fill="none" stroke="#000" stroke-width="1"/>
<polygon points="802.5,315 799,322 806,322" fill="#000"/>
<polygon points="506,358.5 595,343.5 595,373.5" fill="#00d2d2" stroke="#000"/>
<text x="544.98" y="360.50" font-size="8.5" textLength="38.04" lengthAdjust="spacingAndGlyphs" fill="#000" stroke="#000" stroke-width="0.25">60606.0606</text>
<text x="538.06" y="339.50" font-size="8.5" textLength="19.88" lengthAdjust="spacingAndGlyphs" fill="#000" stroke="#000" stroke-width="0.25">Gain6</text>
<path d="M506.5,358.5 L462.5,358.5" fill="none" stroke="#000" stroke-width="1"/>
<path d="M798.5,454.5 L798.5,422.5 L614.5,422.5 L614.5,358.5 L602.5,358.5" fill="none" stroke="#000" stroke-width="1"/>
<polygon points="596,358.5 603,355 603,362" fill="#000"/>
<rect x="470.5" y="397.5" width="24" height="26" fill="#00d2d2" stroke="#000"/>
<rect x="473.5" y="400.5" width="18" height="10" fill="none" stroke="#000"/>
<text x="468.87" y="394.00" font-size="8.5" textLength="25.27" lengthAdjust="spacingAndGlyphs" fill="#000" stroke="#000" stroke-width="0.25">Scope1</text>
<path d="M874.5,410.5 L501.5,410.5" fill="none" stroke="#000" stroke-width="1"/>
<polygon points="495,410.5 502,407 502,414" fill="#000"/>
<path d="M854.5,378.5 L854.5,410.5" fill="none" stroke="#000" stroke-width="1"/>
<rect x="853" y="409" width="3" height="3" fill="#000"/>
<polygon points="873.5,410.5 866.5,407 866.5,414" fill="#000"/>
<rect x="874.5" y="398.5" width="72" height="24" fill="#00d2d2" stroke="#000"/>
<rect x="878.5" y="402.5" width="50" height="10" fill="none" stroke="#000"/>
<text x="907.48" y="409.50" font-size="8.5" textLength="18.02" lengthAdjust="spacingAndGlyphs" fill="#000" stroke="#000" stroke-width="0.25">210.9</text>
<text x="895.72" y="395.00" font-size="8.5" textLength="28.57" lengthAdjust="spacingAndGlyphs" fill="#000" stroke="#000" stroke-width="0.25">Display3</text>
<rect x="730.5" y="326.5" width="32" height="24" fill="#00d2d2" stroke="#000"/>
<text x="735.49" y="340.50" font-size="8.5" textLength="22.02" lengthAdjust="spacingAndGlyphs" fill="#000" stroke="#000" stroke-width="0.25">466.67</text>
<text x="728.52" y="322.50" font-size="8.5" textLength="33.96" lengthAdjust="spacingAndGlyphs" fill="#000" stroke="#000" stroke-width="0.25">Constant7</text>
<path d="M730.5,338.5 L681.5,338.5" fill="none" stroke="#000" stroke-width="1"/>
<polygon points="675,338.5 682,335 682,342" fill="#000"/>
<circle cx="662.5" cy="338.5" r="12" fill="#00d2d2" stroke="#000"/>
<path d="M666.5,338.5 h5 M669.5,336 v5" stroke="#000" fill="none"/>
<path d="M659.5,345.5 h5 M662.5,343 v5" stroke="#000" fill="none"/>
<polygon points="673.5,378.5 766.5,363.5 766.5,393.5" fill="#00d2d2" stroke="#000"/>
<text x="723.99" y="380.50" font-size="8.5" textLength="18.02" lengthAdjust="spacingAndGlyphs" fill="#000" stroke="#000" stroke-width="0.25">0.875</text>
<text x="704.99" y="360.00" font-size="8.5" textLength="24.02" lengthAdjust="spacingAndGlyphs" fill="#000" stroke="#000" stroke-width="0.25">Gain14</text>
<path d="M673.5,378.5 L662.5,378.5 L662.5,357.5" fill="none" stroke="#000" stroke-width="1"/>
<polygon points="662.5,351 659,358 666,358" fill="#000"/>
<circle cx="590.5" cy="454.5" r="12" fill="#e6cd55" stroke="#000"/>
<path d="M583.5,447.5 h5 M586.5,445 v5" stroke="#000" fill="none"/>
<path d="M579.5,451.5 h5 M582.5,449 v5" stroke="#000" fill="none"/>
<path d="M579.5,456.5 h5" stroke="#000" fill="none"/>
<path d="M583.5,460.5 h5" stroke="#000" fill="none"/>
<path d="M588.5,462.5 h5" stroke="#000" fill="none"/>
<path d="M602.5,454.5 L631.5,454.5" fill="none" stroke="#000" stroke-width="1"/>
<polygon points="637.5,454.5 630.5,451 630.5,458" fill="#000"/>
<rect x="638.5" y="442.5" width="24" height="24" fill="#e6cd55" stroke="#000"/>
<path d="M651.0,446 v6 M651.0,446.5 l-2,1.5" stroke="#000" stroke-width="1.1" fill="none"/>
<path d="M647.0,454.5 h7" stroke="#000"/>
<text x="648.30" y="461.8" font-size="8.5" stroke="#000" stroke-width="0.3">s</text>
<text x="634.06" y="476.00" font-size="8.5" textLength="31.88" lengthAdjust="spacingAndGlyphs" fill="#000" stroke="#000" stroke-width="0.25">Integrator</text>
<path d="M662.5,454.5 L747.5,454.5" fill="none" stroke="#000" stroke-width="1"/>
<polygon points="753.5,454.5 746.5,451 746.5,458" fill="#000"/>
<rect x="733" y="453" width="3" height="3" fill="#000"/>
<rect x="754.5" y="442.5" width="24" height="24" fill="#e6cd55" stroke="#000"/>
<path d="M767.0,446 v6 M767.0,446.5 l-2,1.5" stroke="#000" stroke-width="1.1" fill="none"/>
<path d="M763.0,454.5 h7" stroke="#000"/>
<text x="764.30" y="461.8" font-size="8.5" stroke="#000" stroke-width="0.3">s</text>
<text x="747.99" y="476.00" font-size="8.5" textLength="36.03" lengthAdjust="spacingAndGlyphs" fill="#000" stroke="#000" stroke-width="0.25">Integrator1</text>
<path d="M778.5,454.5 L867.5,454.5" fill="none" stroke="#000" stroke-width="1"/>
<polygon points="873.5,454.5 866.5,451 866.5,458" fill="#000"/>
<rect x="797" y="453" width="3" height="3" fill="#000"/>
<rect x="853" y="453" width="3" height="3" fill="#000"/>
<rect x="874.5" y="442.5" width="72" height="24" fill="#e6cd55" stroke="#000"/>
<rect x="878.5" y="446.5" width="50" height="10" fill="none" stroke="#000"/>
<text x="895.47" y="453.50" font-size="8.5" textLength="30.03" lengthAdjust="spacingAndGlyphs" fill="#000" stroke="#000" stroke-width="0.25">0.002625</text>
<text x="897.79" y="475.70" font-size="8.5" textLength="24.43" lengthAdjust="spacingAndGlyphs" fill="#000" stroke="#000" stroke-width="0.25">Display</text>
<path d="M734.5,454.5 L734.5,506.5 L729.5,506.5" fill="none" stroke="#000" stroke-width="1"/>
<polygon points="723,506.5 730,503 730,510" fill="#000"/>
<polygon points="645,506.5 722.5,492.5 722.5,520.5" fill="#e6cd55" stroke="#000"/>
<text x="675.18" y="508.50" font-size="8.5" textLength="42.04" lengthAdjust="spacingAndGlyphs" fill="#000" stroke="#000" stroke-width="0.25">1290.322581</text>
<text x="672.06" y="488.00" font-size="8.5" textLength="19.88" lengthAdjust="spacingAndGlyphs" fill="#000" stroke="#000" stroke-width="0.25">Gain1</text>
<path d="M645.5,506.5 L590.5,506.5 L590.5,473.5" fill="none" stroke="#000" stroke-width="1"/>
<polygon points="590.5,467 587,474 594,474" fill="#000"/>
<path d="M854.5,454.5 L854.5,586.5 L613.5,586.5" fill="none" stroke="#000" stroke-width="1"/>
<polygon points="607,586.5 614,583 614,590" fill="#000"/>
<rect x="853" y="489" width="3" height="3" fill="#000"/>
<rect x="853" y="529" width="3" height="3" fill="#000"/>
<rect x="738" y="585" width="3" height="3" fill="#000"/>
<path d="M854.5,490.5 L871.5,490.5" fill="none" stroke="#000" stroke-width="1"/>
<polygon points="877.5,490.5 870.5,487 870.5,494" fill="#000"/>
<rect x="878.5" y="478.5" width="24" height="24" fill="#e6cd55" stroke="#000"/>
<rect x="881.5" y="481.5" width="18" height="9" fill="none" stroke="#000"/>
<text x="878.44" y="511.50" font-size="8.5" textLength="21.12" lengthAdjust="spacingAndGlyphs" fill="#000" stroke="#000" stroke-width="0.25">Scope</text>
<rect x="794.5" y="478.5" width="56" height="32" fill="#e6cd55" stroke="#000"/>
<text x="801.48" y="496.50" font-size="8.5" textLength="42.04" lengthAdjust="spacingAndGlyphs" fill="#000" stroke="#000" stroke-width="0.25">316.9569892</text>
<text x="807.09" y="474.00" font-size="8.5" textLength="29.82" lengthAdjust="spacingAndGlyphs" fill="#000" stroke="#000" stroke-width="0.25">Constant</text>
<path d="M794.5,494.5 L786.5,494.5 L786.5,522.5 L781.5,522.5" fill="none" stroke="#000" stroke-width="1"/>
<polygon points="775,522.5 782,519 782,526" fill="#000"/>
<path d="M854.5,530.5 L781.5,530.5" fill="none" stroke="#000" stroke-width="1"/>
<polygon points="775,530.5 782,527 782,534" fill="#000"/>
<rect x="750.5" y="518.5" width="24" height="24" fill="#e6cd55" stroke="#000"/>
<path d="M751,530.5 h5 l7,-8 M763,522.5 h11 M763,539.5 h11 M767.5,528 v5" stroke="#000" fill="none"/>
<rect x="763" y="521" width="2" height="3" fill="#000"/><rect x="763" y="538" width="2" height="3" fill="#000"/>
<path d="M767.5,530.5 h7" stroke="#000"/>
<text x="748.46" y="515.00" font-size="8.5" textLength="26.09" lengthAdjust="spacingAndGlyphs" fill="#000" stroke="#000" stroke-width="0.25">Switch1</text>
<rect x="794.5" y="546.5" width="56" height="32" fill="#e6cd55" stroke="#ff8000"/>
<text x="800.28" y="564.50" font-size="8.5" textLength="44.44" lengthAdjust="spacingAndGlyphs" fill="#ff8000" stroke="#ff8000" stroke-width="0.25">-1075.268817</text>
<text x="805.02" y="543.00" font-size="8.5" textLength="33.96" lengthAdjust="spacingAndGlyphs" fill="#ff8000" stroke="#ff8000" stroke-width="0.25">Constant2</text>
<path d="M794.5,562.5 L786.5,562.5 L786.5,538.5 L781.5,538.5" fill="none" stroke="#ff8000" stroke-width="1"/>
<polygon points="775,538.5 782,535 782,542" fill="#ff8000"/>
<path d="M750.5,530.5 L576.5,530.5 L576.5,472.5 L579.5,469.5" fill="none" stroke="#000" stroke-width="1"/>
<polygon points="584.00,465.00 581.17,473.49 575.51,467.83" fill="#000"/>
<path d="M739.5,562.5 L739.5,646.5" fill="none" stroke="#000" stroke-width="1"/>
<path d="M742.5,562.5 L737.5,562.5" fill="none" stroke="#000" stroke-width="1"/>
<polygon points="731,562.5 738,559 738,566" fill="#000"/>
<path d="M742.5,610.5 L737.5,610.5" fill="none" stroke="#000" stroke-width="1"/>
<polygon points="731,610.5 738,607 738,614" fill="#000"/>
<path d="M739.5,646.5 L733.5,646.5" fill="none" stroke="#000" stroke-width="1"/>
<polygon points="727,646.5 734,643 734,650" fill="#000"/>
<polygon points="648.5,562.5 730.5,547.5 730.5,577.5" fill="#e6cd55" stroke="#000"/>
<text x="680.48" y="564.50" font-size="8.5" textLength="42.04" lengthAdjust="spacingAndGlyphs" fill="#000" stroke="#000" stroke-width="0.25">89569.89247</text>
<text x="678.06" y="544.00" font-size="8.5" textLength="19.88" lengthAdjust="spacingAndGlyphs" fill="#000" stroke="#000" stroke-width="0.25">Gain2</text>
<polygon points="648.5,610.5 730.5,595.5 730.5,625.5" fill="#e6cd55" stroke="#ff8000"/>
<text x="680.98" y="612.50" font-size="8.5" textLength="42.04" lengthAdjust="spacingAndGlyphs" fill="#ff8000" stroke="#ff8000" stroke-width="0.25">646460.2151</text>
<text x="677.56" y="592.00" font-size="8.5" textLength="19.88" lengthAdjust="spacingAndGlyphs" fill="#ff8000" stroke="#ff8000" stroke-width="0.25">Gain4</text>
<polygon points="648.5,646.5 726.5,631.5 726.5,661.5" fill="#e6cd55" stroke="#000"/>
<text x="679.25" y="648.50" font-size="8.5" textLength="41.50" lengthAdjust="spacingAndGlyphs" fill="#000" stroke="#000" stroke-width="0.25">0.631174582</text>
<text x="676.06" y="628.00" font-size="8.5" textLength="19.88" lengthAdjust="spacingAndGlyphs" fill="#000" stroke="#000" stroke-width="0.25">Gain3</text>
<path d="M648.5,562.5 L642.5,562.5 L642.5,578.5 L613.5,578.5" fill="none" stroke="#000" stroke-width="1"/>
<polygon points="607,578.5 614,575 614,582" fill="#000"/>
<path d="M648.5,610.5 L642.5,610.5 L642.5,594.5 L613.5,594.5" fill="none" stroke="#ff8000" stroke-width="1"/>
<polygon points="607,594.5 614,591 614,598" fill="#ff8000"/>
<rect x="582.5" y="574.5" width="24" height="24" fill="#e6cd55" stroke="#000"/>
<path d="M583,586.5 h5 l7,-8 M595,578.5 h11 M595,595.5 h11 M599.5,584 v5 M599.5,586.5 h7" stroke="#000" fill="none"/>
<rect x="595" y="577" width="2" height="3" fill="#000"/><rect x="595" y="594" width="2" height="3" fill="#000"/>
<text x="580.96" y="571.00" font-size="8.5" textLength="26.09" lengthAdjust="spacingAndGlyphs" fill="#000" stroke="#000" stroke-width="0.25">Switch2</text>
<path d="M582.5,586.5 L567.5,586.5 L567.5,460.5 L570.5,460.5" fill="none" stroke="#000" stroke-width="1"/>
<polygon points="578.50,457.50 572.35,463.99 569.61,456.48" fill="#000"/>
<path d="M648.5,646.5 L609.5,646.5" fill="none" stroke="#000" stroke-width="1"/>
<polygon points="603,646.5 610,643 610,650" fill="#000"/>
<rect x="562.5" y="638.5" width="40" height="28" fill="#e6cd55" stroke="#000"/>
<text x="580.10" y="654.50" font-size="8.5" textLength="4.80" lengthAdjust="spacingAndGlyphs" fill="#000" stroke="#000" stroke-width="0.25">X</text>
<text x="567.09" y="635.00" font-size="8.5" textLength="29.82" lengthAdjust="spacingAndGlyphs" fill="#000" stroke="#000" stroke-width="0.25">Product1</text>
<path d="M562.5,654.5 L554.5,654.5 L554.5,447.5 L570.5,447.5" fill="none" stroke="#000" stroke-width="1"/>
<polygon points="578.50,451.00 569.61,452.02 572.35,444.51" fill="#000"/>
<rect x="798.5" y="610.5" width="40" height="28" fill="#e6cd55" stroke="#000"/>
<text x="816.10" y="626.50" font-size="8.5" textLength="4.80" lengthAdjust="spacingAndGlyphs" fill="#000" stroke="#000" stroke-width="0.25">X</text>
<text x="805.66" y="606.50" font-size="8.5" textLength="25.67" lengthAdjust="spacingAndGlyphs" fill="#000" stroke="#000" stroke-width="0.25">Product</text>
<path d="M962.5,378.5 L962.5,514.5 L862.5,514.5 L862.5,630.5 L845.5,630.5" fill="none" stroke="#000" stroke-width="1"/>
<polygon points="839,630.5 846,627 846,634" fill="#000"/>
<path d="M862.5,618.5 L845.5,618.5" fill="none" stroke="#000" stroke-width="1"/>
<polygon points="839,618.5 846,615 846,622" fill="#000"/>
<rect x="861" y="617" width="3" height="3" fill="#000"/>
<path d="M798.5,626.5 L774.5,626.5 L774.5,694.5 L733.5,694.5" fill="none" stroke="#000" stroke-width="1"/>
<polygon points="727,694.5 734,691 734,698" fill="#000"/>
<rect x="773" y="665" width="3" height="3" fill="#000"/>
<path d="M774.5,666.5 L614.5,666.5 L614.5,658.5 L609.5,658.5" fill="none" stroke="#000" stroke-width="1"/>
<polygon points="603,658.5 610,655 610,662" fill="#000"/>
<polygon points="649,694.5 726.5,678.5 726.5,704.5" fill="#e6cd55" stroke="#000"/>
<text x="681.58" y="696.50" font-size="8.5" textLength="34.03" lengthAdjust="spacingAndGlyphs" fill="#000" stroke="#000" stroke-width="0.25">0.0107527</text>
<text x="677.13" y="675.00" font-size="8.5" textLength="15.74" lengthAdjust="spacingAndGlyphs" fill="#000" stroke="#000" stroke-width="0.25">Gain</text>
<path d="M649.5,694.5 L542.5,694.5 L542.5,435.5 L577.5,435.5 L579.5,437.5" fill="none" stroke="#000" stroke-width="1"/>
<polygon points="584.00,443.50 575.79,439.94 581.92,434.80" fill="#000"/>
</svg>
</body></html>
